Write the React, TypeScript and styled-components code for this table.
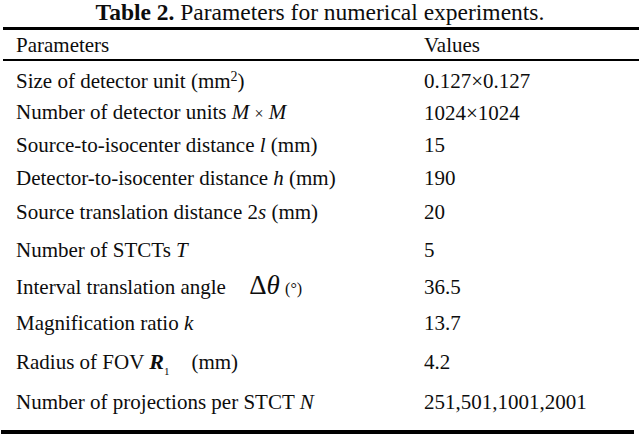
import React from "react";
import styled, { createGlobalStyle } from "styled-components";

const Global = createGlobalStyle`
  html, body { margin: 0; padding: 0; background: #fff; }
  body { font-family: "Liberation Serif", "Times New Roman", serif; color: #0d0d0d; }
`;

const Page = styled.div`
  width: 640px;
  height: 435px;
  overflow: hidden;
  display: flex;
  flex-direction: column;
`;

const Caption = styled.div`
  height: 27px;
  display: flex;
  justify-content: center;
  align-items: center;
  font-size: 23.5px;
  line-height: 24px;
  white-space: nowrap;
  padding-bottom: 4px;
  box-sizing: border-box;
  flex: none;
  b { font-weight: bold; }
`;

const Rule = styled.div<{ $h: number; $ml?: number; $mr?: number }>`
  height: ${(p) => p.$h}px;
  background: #000;
  margin-left: ${(p) => p.$ml ?? 0}px;
  margin-right: ${(p) => p.$mr ?? 0}px;
  flex: none;
`;

const Row = styled.div<{ $h: number }>`
  height: ${(p) => p.$h}px;
  display: grid;
  grid-template-columns: 424px 1fr;
  align-items: center;
  font-size: 21px;
  line-height: 24px;
  white-space: nowrap;
  flex: none;
`;

const Cell = styled.div`
  padding-left: 16px;
  &:last-child { padding-left: 0; }
`;

const Body = styled.div`
  display: flex;
  flex-direction: column;
  padding-top: 4px;
  padding-bottom: 8px;
  flex: none;
`;

const I = styled.i`font-style: italic;`;
const BI = styled.b`font-style: italic; font-weight: bold; font-size: 22px;`;
const Sup = styled.sup`font-size: 14px; vertical-align: 7px; line-height: 0;`;
const Sub = styled.sub`font-size: 11px; vertical-align: -6px; line-height: 0; font-weight: normal; font-style: normal;`;
const Big = styled.span`font-size: 27px; margin-left: 18px;`;
const Small = styled.span`font-size: 16px;`;
const Gap = styled.span`display: inline-block; width: 22px;`;

const rows: { h: number; label: React.ReactNode; value: string }[] = [
  { h: 32, label: <>Size of detector unit (mm<Sup>2</Sup>)</>, value: "0.127×0.127" },
  { h: 32, label: <>Number of detector units <I>M</I> <Small>×</Small> <I>M</I></>, value: "1024×1024" },
  { h: 32, label: <>Source-to-isocenter distance <I>l</I> (mm)</>, value: "15" },
  { h: 33, label: <>Detector-to-isocenter distance <I>h</I> (mm)</>, value: "190" },
  { h: 36, label: <>Source translation distance 2<I>s</I> (mm)</>, value: "20" },
  { h: 39, label: <>Number of STCTs <I>T</I></>, value: "5" },
  { h: 35, label: <>Interval translation angle <Big>Δ<I>θ</I></Big> <Small>(°)</Small></>, value: "36.5" },
  { h: 37, label: <>Magnification ratio <I>k</I></>, value: "13.7" },
  { h: 41, label: <>Radius of FOV <BI>R</BI><Sub>1</Sub><Gap />(mm)</>, value: "4.2" },
  { h: 40, label: <>Number of projections per STCT <I>N</I></>, value: "251,501,1001,2001" },
];

export default function App() {
  return (
    <Page>
      <Global />
      <Caption>
        <span><b>Table 2.</b> Parameters for numerical experiments.</span>
      </Caption>
      <Rule $h={3} $ml={3} $mr={1} />
      <Row $h={29}>
        <Cell>Parameters</Cell>
        <Cell>Values</Cell>
      </Row>
      <Rule $h={2} $ml={3} $mr={1} />
      <Body>
        {rows.map((r, i) => (
          <Row key={i} $h={r.h}>
            <Cell>{r.label}</Cell>
            <Cell>{r.value}</Cell>
          </Row>
        ))}
      </Body>
      <Rule $h={4} $ml={1} $mr={6} />
    </Page>
  );
}
